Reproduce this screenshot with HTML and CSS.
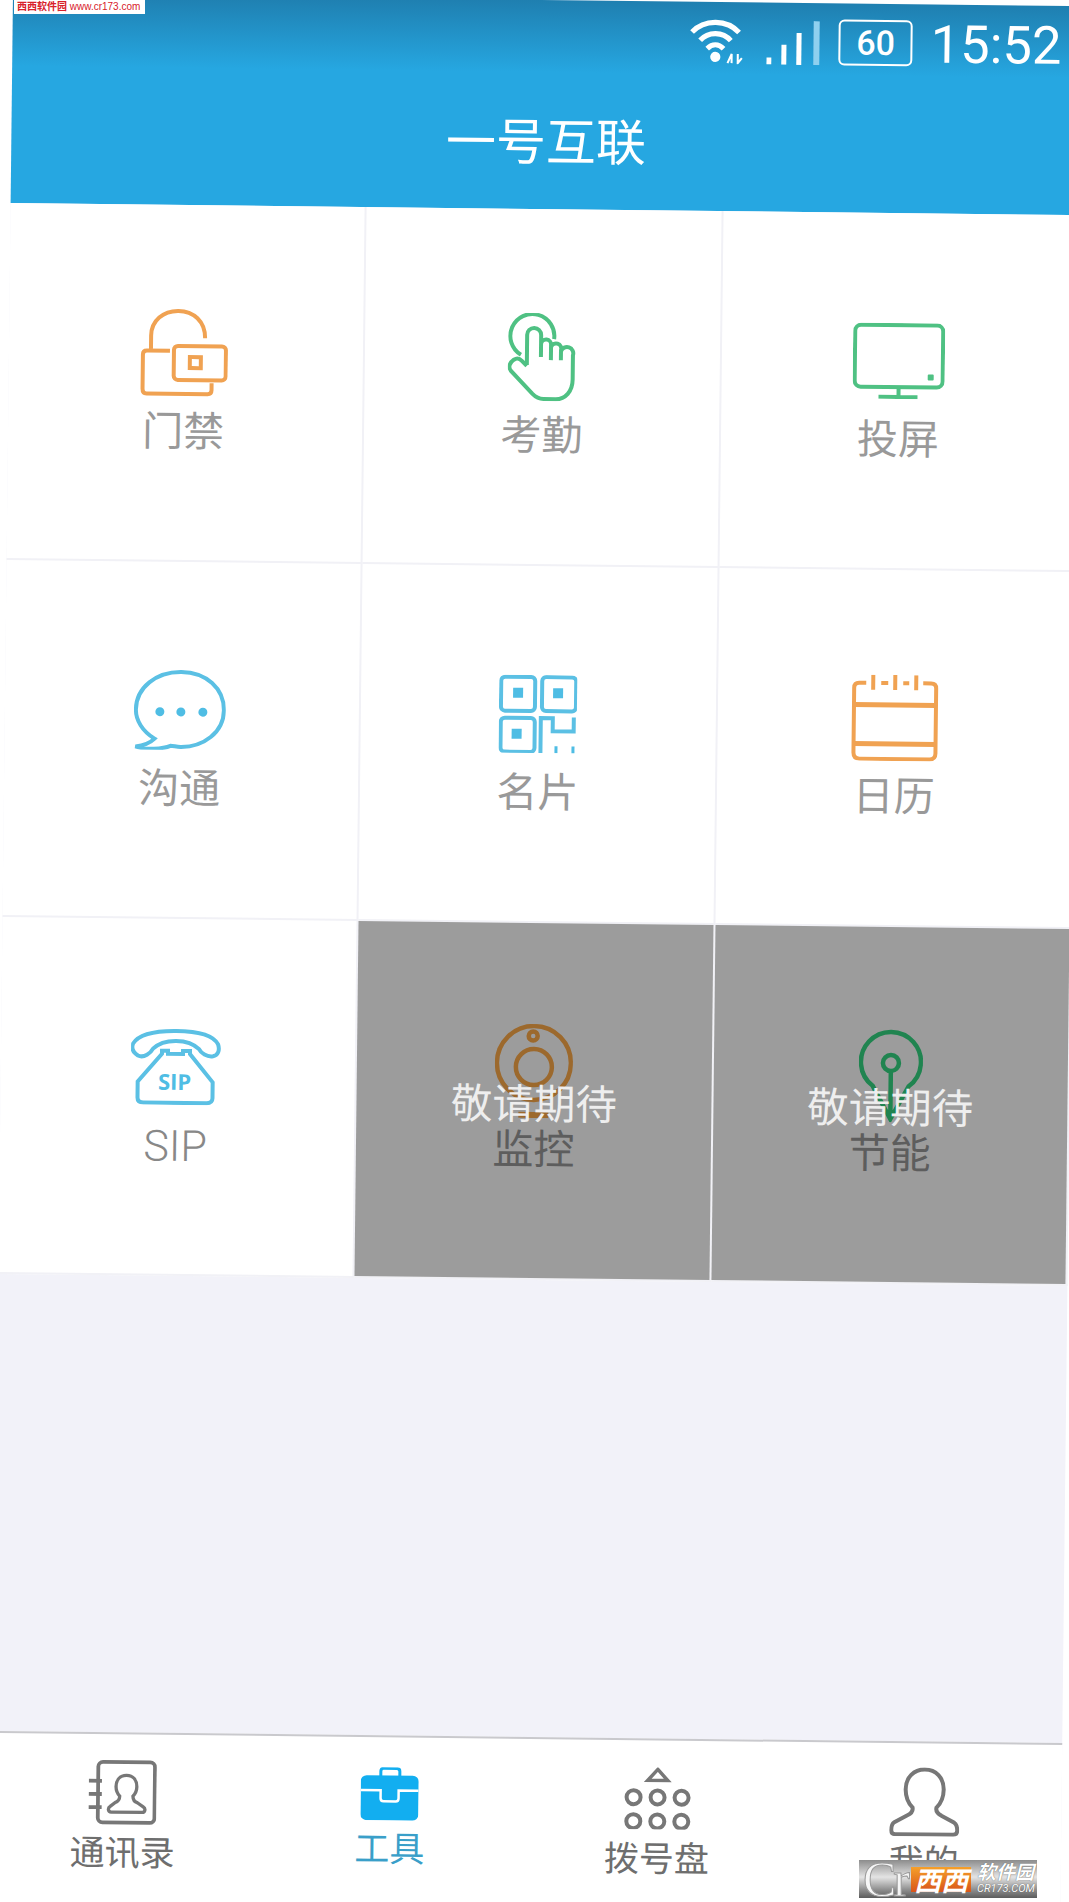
FILE: index.html
```html
<!DOCTYPE html>
<html lang="zh-CN">
<head>
    <meta charset="UTF-8">
    <title>一号互联</title>
    <link rel="stylesheet" href="styles.css">
</head>
<body>
    <div class="screen">
        <header class="header">
            <div class="status-bar">
                <svg class="st-wifi" viewBox="0 0 56 46"><path d="M3 15C15 2 37 2 49 15M11 23C19 14 33 14 41 23M18 31C23 26 29 26 34 31"/><circle class="solid" cx="26" cy="39" r="5"/><path class="thin" d="M38 45L42 36V45M48 36V45L52 40"/></svg>
                <svg class="st-signal" viewBox="0 0 54 44"><rect x="0" y="37" width="5" height="7"/><rect x="15" y="24" width="5" height="20"/><rect x="30" y="12" width="5" height="32"/><rect class="dim" x="47" y="0" width="6" height="44"/></svg>
                <div class="st-battery"><span>60</span></div>
                <span class="st-time">15:52</span>
            </div>
            <h1 class="title">一号互联</h1>
        </header>

        <div class="grid">
            <div class="cell">
                <div class="cell-icon">
                    <svg class="orange" width="88" height="88" viewBox="0 0 88 88"><path d="M11 40V27C11 12 23 2 38 2S65 12 65 29M30 42H7Q3 42 3 46V80Q3 85 7 85H68Q72 85 72 81V74"/><rect x="34" y="37" width="52" height="34" rx="4"/><rect x="50" y="48" width="11" height="11"/></svg>
                </div>
                <div class="cell-label">门禁</div>
            </div>
            <div class="cell">
                <div class="cell-icon">
                    <svg class="green" width="68" height="88" viewBox="0 0 68 88"><path d="M13 42A22 22 0 1 1 46 26M19 52V22A7 7 0 0 1 33 22V44M33 31A5 5 0 0 1 43 32V47M43 34A5 5 0 0 1 53 37V47M53 38A6 6 0 0 1 65 42V66C65 78 58 86 48 86H36C31 86 28 84 25 81L3 58C0 54 2 50 6 47C9 45 12 46 14 48L19 53"/></svg>
                </div>
                <div class="cell-label">考勤</div>
            </div>
            <div class="cell">
                <div class="cell-icon">
                    <svg class="green" width="92" height="76" viewBox="0 0 92 76"><rect x="2" y="2" width="88" height="62" rx="6"/><rect class="solid" x="75" y="51" width="6" height="6" rx="1"/><path d="M46 64V74M26 74H65"/></svg>
                </div>
                <div class="cell-label">投屏</div>
            </div>

            <div class="cell">
                <div class="cell-icon">
                    <svg class="blue" width="92" height="80" viewBox="0 0 92 80"><path d="M21 69C9 62 2 51 2 40C2 18 22 2 47 2S90 18 90 40S70 77 47 77C43 77 40 76 37 76C30 79 12 81 2 77C10 76 17 73 21 69Z"/><circle class="solid" cx="26" cy="42" r="4.5"/><circle class="solid" cx="47" cy="42" r="4.5"/><circle class="solid" cx="69" cy="42" r="4.5"/></svg>
                </div>
                <div class="cell-label">沟通</div>
            </div>
            <div class="cell">
                <div class="cell-icon">
                    <svg class="blue" width="78" height="78" viewBox="0 0 78 78"><rect x="2" y="2" width="34" height="34" rx="4"/><rect x="43" y="2" width="34" height="34" rx="4"/><rect x="2" y="43" width="34" height="34" rx="4"/><rect class="solid" x="14" y="13" width="10" height="10"/><rect class="solid" x="54" y="13" width="10" height="10"/><rect class="solid" x="13" y="54" width="10" height="10"/><path d="M42 78V43H54V56H75V42"/><rect class="solid" x="56" y="71" width="3" height="7"/><rect class="solid" x="73" y="71" width="3" height="7"/></svg>
                </div>
                <div class="cell-label">名片</div>
            </div>
            <div class="cell">
                <div class="cell-icon">
                    <svg class="orange" width="88" height="86" viewBox="0 0 88 86"><path d="M15 8H8Q3 8 3 13V78Q3 84 9 84H79Q85 84 85 78V13Q85 8 80 8H72M30 8H37M52 8H58M22 0V15M44 0V15M65 0V15"/><path class="thick" d="M3 30H85M3 69H85"/></svg>
                </div>
                <div class="cell-label">日历</div>
            </div>

            <div class="cell">
                <div class="cell-icon">
                    <svg class="blue" width="90" height="76" viewBox="0 0 90 76"><path d="M7 27C2 24 0 20 2 15C8 5 26 2 45 2S82 5 87 15C89 21 87 26 82 27C76 28 70 24 68 20C62 14 54 12 45 12S28 14 22 20C20 24 13 30 7 27Z"/><path d="M31 25V22H37V25H52V22H59V25L82 53V69Q82 74 76 74H13Q7 74 7 69V53Z"/><text class="sip-text" x="44" y="61">SIP</text></svg>
                </div>
                <div class="cell-label cell-label-latin">SIP</div>
            </div>
            <div class="cell soon">
                <div class="cell-icon">
                    <svg class="orange-soft" width="78" height="94" viewBox="0 0 78 94"><circle cx="39" cy="39" r="37"/><circle cx="39" cy="43" r="18"/><circle cx="38" cy="12" r="4.5"/><path class="thick" d="M24 91H54"/></svg>
                </div>
                <div class="cell-label">监控</div>
                <div class="soon-mask">敬请期待</div>
            </div>
            <div class="cell soon">
                <div class="cell-icon">
                    <svg class="green-soft" width="64" height="94" viewBox="0 0 64 94"><path d="M14 58A30 30 0 1 1 50 58L32 91ZM32 44V91"/><circle cx="32" cy="35" r="8"/></svg>
                </div>
                <div class="cell-label">节能</div>
                <div class="soon-mask">敬请期待</div>
            </div>
        </div>

        <main class="blank"></main>

        <nav class="tabs">
            <div class="tab">
                <div class="tab-icon">
                    <svg class="gray" width="68" height="68" viewBox="0 0 72 68"><rect x="10" y="2" width="60" height="64" rx="5"/><path d="M0 22H14M0 36H14M0 50H14"/><path class="thin" d="M40 16C33 16 29 21 29 28C29 33 31 36 33 38C33 42 31 44 28 45L23 49C20 51 21 55 24 55H57C60 55 61 51 58 49L52 45C49 44 47 42 47 38C49 36 51 33 51 28C51 21 47 16 40 16Z"/></svg>
                </div>
                <div class="tab-label">通讯录</div>
            </div>
            <div class="tab active">
                <div class="tab-icon">
                    <svg class="case" width="58" height="53" viewBox="0 0 58 53"><path class="case-handle" d="M20 9V4Q20 1 23 1H36Q39 1 39 4V9"/><rect class="case-body" x="0" y="8" width="58" height="45" rx="6"/><path class="case-line" d="M0 23H20V31Q20 34 23 34H35Q38 34 38 31V23H58"/></svg>
                </div>
                <div class="tab-label">工具</div>
            </div>
            <div class="tab">
                <div class="tab-icon">
                    <svg class="gray" width="68" height="62" viewBox="0 0 68 62"><path class="thin" d="M34 2L44 13H24Z"/><circle cx="10" cy="30" r="7"/><circle cx="34" cy="30" r="7"/><circle cx="58" cy="30" r="7"/><circle cx="10" cy="54" r="7"/><circle cx="34" cy="54" r="7"/><circle cx="58" cy="54" r="7"/></svg>
                </div>
                <div class="tab-label">拨号盘</div>
            </div>
            <div class="tab">
                <div class="tab-icon">
                    <svg class="gray" width="70" height="69" viewBox="0 0 70 69"><path d="M35 2C24 2 16 10 16 22C16 30 19 36 23 40C24 44 22 46 18 48L5 55C2 57 2 60 2 63Q2 67 6 67H64Q68 67 68 63C68 60 68 57 65 55L52 48C48 46 46 44 47 40C51 36 54 30 54 22C54 10 46 2 35 2Z"/></svg>
                </div>
                <div class="tab-label">我的</div>
            </div>
        </nav>
    </div>

    <!-- watermarks sit on top of the photo, not rotated with it -->
    <div class="mark-top"><b>西西软件园</b> www.cr173.com</div>
    <div class="mark-bottom">
        <span class="mark-cr">Cr</span>
        <span class="mark-xi">西西</span>
        <span class="mark-side"><b>软件园</b><i>CR173.COM</i></span>
    </div>
</body>
</html>
```

FILE: styles.css
```css
html, body {
    margin: 0;
    width: 1069px;
    height: 1902px;
    overflow: hidden;
    background: #fff;
}
body {
    position: relative;
    font-family: Roboto, "Noto Sans CJK SC", sans-serif;
}

/* the source is a slightly tilted photo of the phone screen */
.screen {
    width: 1069px;
    height: 1930px;
    margin-left: 13px;
    margin-top: -6.5px;
    display: flex;
    flex-direction: column;
    transform: rotate(0.65deg);
    transform-origin: 0 0;
    background: #f2f2f9;
}

/* header */
.header {
    height: 209px;
    flex: none;
    display: flex;
    flex-direction: column;
    background: linear-gradient(to bottom, #1f7fb0 0, #26a7e1 72px);
    color: #fff;
}
.status-bar {
    height: 62px;
    flex: none;
    display: flex;
    justify-content: flex-end;
    align-items: flex-end;
    padding-right: 20px;
    box-sizing: border-box;
}
.st-wifi {
    width: 58px;
    height: 47px;
    margin-right: 20px;
    fill: none;
    stroke: #fff;
    stroke-width: 5;
}
.st-wifi .solid { fill: #fff; stroke: none; }
.st-wifi .thin { stroke-width: 2; }
.st-signal {
    width: 54px;
    height: 44px;
    margin-right: 18px;
    fill: #fff;
}
.st-signal .dim { fill: #8fd0ef; }
.st-battery {
    width: 70px;
    height: 42px;
    margin-right: 18px;
    border: 2px solid #fff;
    border-radius: 6px;
    display: flex;
    align-items: center;
    justify-content: center;
    font-size: 34px;
    font-weight: 500;
}
.st-time {
    font-size: 52.5px;
    font-weight: 400;
    line-height: 44px;
}
.title {
    margin: 0;
    flex: 1;
    display: flex;
    align-items: center;
    justify-content: center;
    font-size: 50px;
    font-weight: 400;
    padding-top: 4px;
}

/* tool grid */
.grid {
    flex: none;
    display: grid;
    grid-template-columns: repeat(3, 1fr);
    grid-auto-rows: 357px;
    background: #fff;
}
.cell {
    position: relative;
    box-sizing: border-box;
    padding-top: 98px;
    border-right: 2px solid #f1f1f6;
    border-bottom: 2px solid #f1f1f6;
    text-align: center;
}
.cell:nth-child(3n+1) { padding-right: 4px; }
.cell-icon {
    height: 100px;
    display: flex;
    align-items: center;
    justify-content: center;
}
.cell-label {
    margin-top: 5px;
    font-size: 41px;
    line-height: 48px;
    color: #999;
}
.cell-label-latin {
    font-size: 43px;
    font-weight: 300;
    color: #888;
}
.soon-mask {
    position: absolute;
    inset: 0;
    display: flex;
    align-items: center;
    justify-content: center;
    background: rgba(0, 0, 0, 0.39);
    color: #eee;
    font-size: 41.5px;
}

/* icon strokes */
.cell-icon svg { fill: none; stroke-width: 4; }
.orange { stroke: #f0a252; }
.green { stroke: #4fc183; }
.blue { stroke: #5bc0e4; }
.orange-soft { stroke: #ffac4a; stroke-width: 4.5 !important; }
.green-soft { stroke: #35d884; stroke-width: 4.5 !important; }
.orange .thick { stroke-width: 5; }
.orange-soft .thick { stroke-width: 6; }
.green .solid { fill: #4fc183; stroke: none; }
.blue .solid { fill: #4fbde4; stroke: none; }
.sip-text {
    fill: #4fbde4;
    stroke: none;
    font-family: "Open Sans", sans-serif;
    font-weight: 700;
    font-size: 22px;
    text-anchor: middle;
}

.blank { flex: 1; }

/* bottom tabs */
.tabs {
    height: 193px;
    flex: none;
    box-sizing: border-box;
    display: grid;
    grid-template-columns: repeat(4, 1fr);
    padding-top: 22px;
    border-top: 2px solid #c9c9cd;
    background: #fff;
}
.tab {
    text-align: center;
    padding-right: 7px;
}
.tab-icon {
    height: 72px;
    display: flex;
    align-items: center;
    justify-content: center;
}
.tab-label {
    margin-top: 4px;
    font-size: 35px;
    line-height: 44px;
    color: #6e6e6e;
}
.tab.active .tab-icon { margin-top: -2px; }
.tab.active .tab-label { color: #3a9fc9; margin-top: -1px; }
.gray { fill: none; stroke: #777; stroke-width: 4; }
.gray .thin { stroke-width: 3.5; }
.case-handle { fill: none; stroke: #12aef0; stroke-width: 3; }
.case-body { fill: #12aef0; }
.case-line { fill: none; stroke: #fff; stroke-width: 2.5; }

/* watermarks */
.mark-top {
    position: absolute;
    left: 14px;
    top: 0;
    width: 131px;
    height: 14px;
    padding-left: 3px;
    box-sizing: border-box;
    background: #fff;
    color: #d8202a;
    font-family: "Liberation Sans", "Noto Sans CJK SC", sans-serif;
    font-size: 10px;
    line-height: 13px;
    white-space: nowrap;
    overflow: hidden;
}
.mark-bottom {
    position: absolute;
    left: 859px;
    top: 1860px;
    width: 178px;
    height: 38px;
    display: flex;
    align-items: center;
    background: linear-gradient(to bottom, #8c8c8c 0, #e4e4e4 45%, #8a8a8a 80%, #5c5c5c 100%);
    overflow: hidden;
}
.mark-cr {
    width: 50px;
    padding-left: 4px;
    box-sizing: border-box;
    color: #f6f6f6;
    -webkit-text-stroke: 1px #999;
    font-family: "Liberation Serif", serif;
    font-size: 50px;
    line-height: 38px;
    letter-spacing: -3px;
    flex: none;
}
.mark-xi {
    width: 60px;
    height: 25px;
    margin-left: 2px;
    flex: none;
    background: linear-gradient(to bottom, #f5a02a, #d9541a);
    color: #fff;
    font-family: "Noto Sans CJK SC", sans-serif;
    font-weight: 700;
    font-style: italic;
    font-size: 27px;
    line-height: 25px;
    text-align: center;
    white-space: nowrap;
}
.mark-side {
    margin-left: 6px;
    display: flex;
    flex-direction: column;
    color: #fff;
    text-shadow: 0 0 1px #444;
}
.mark-side b {
    font-size: 19px;
    line-height: 20px;
    font-style: italic;
}
.mark-side i {
    font-size: 11px;
    line-height: 12px;
}
```
